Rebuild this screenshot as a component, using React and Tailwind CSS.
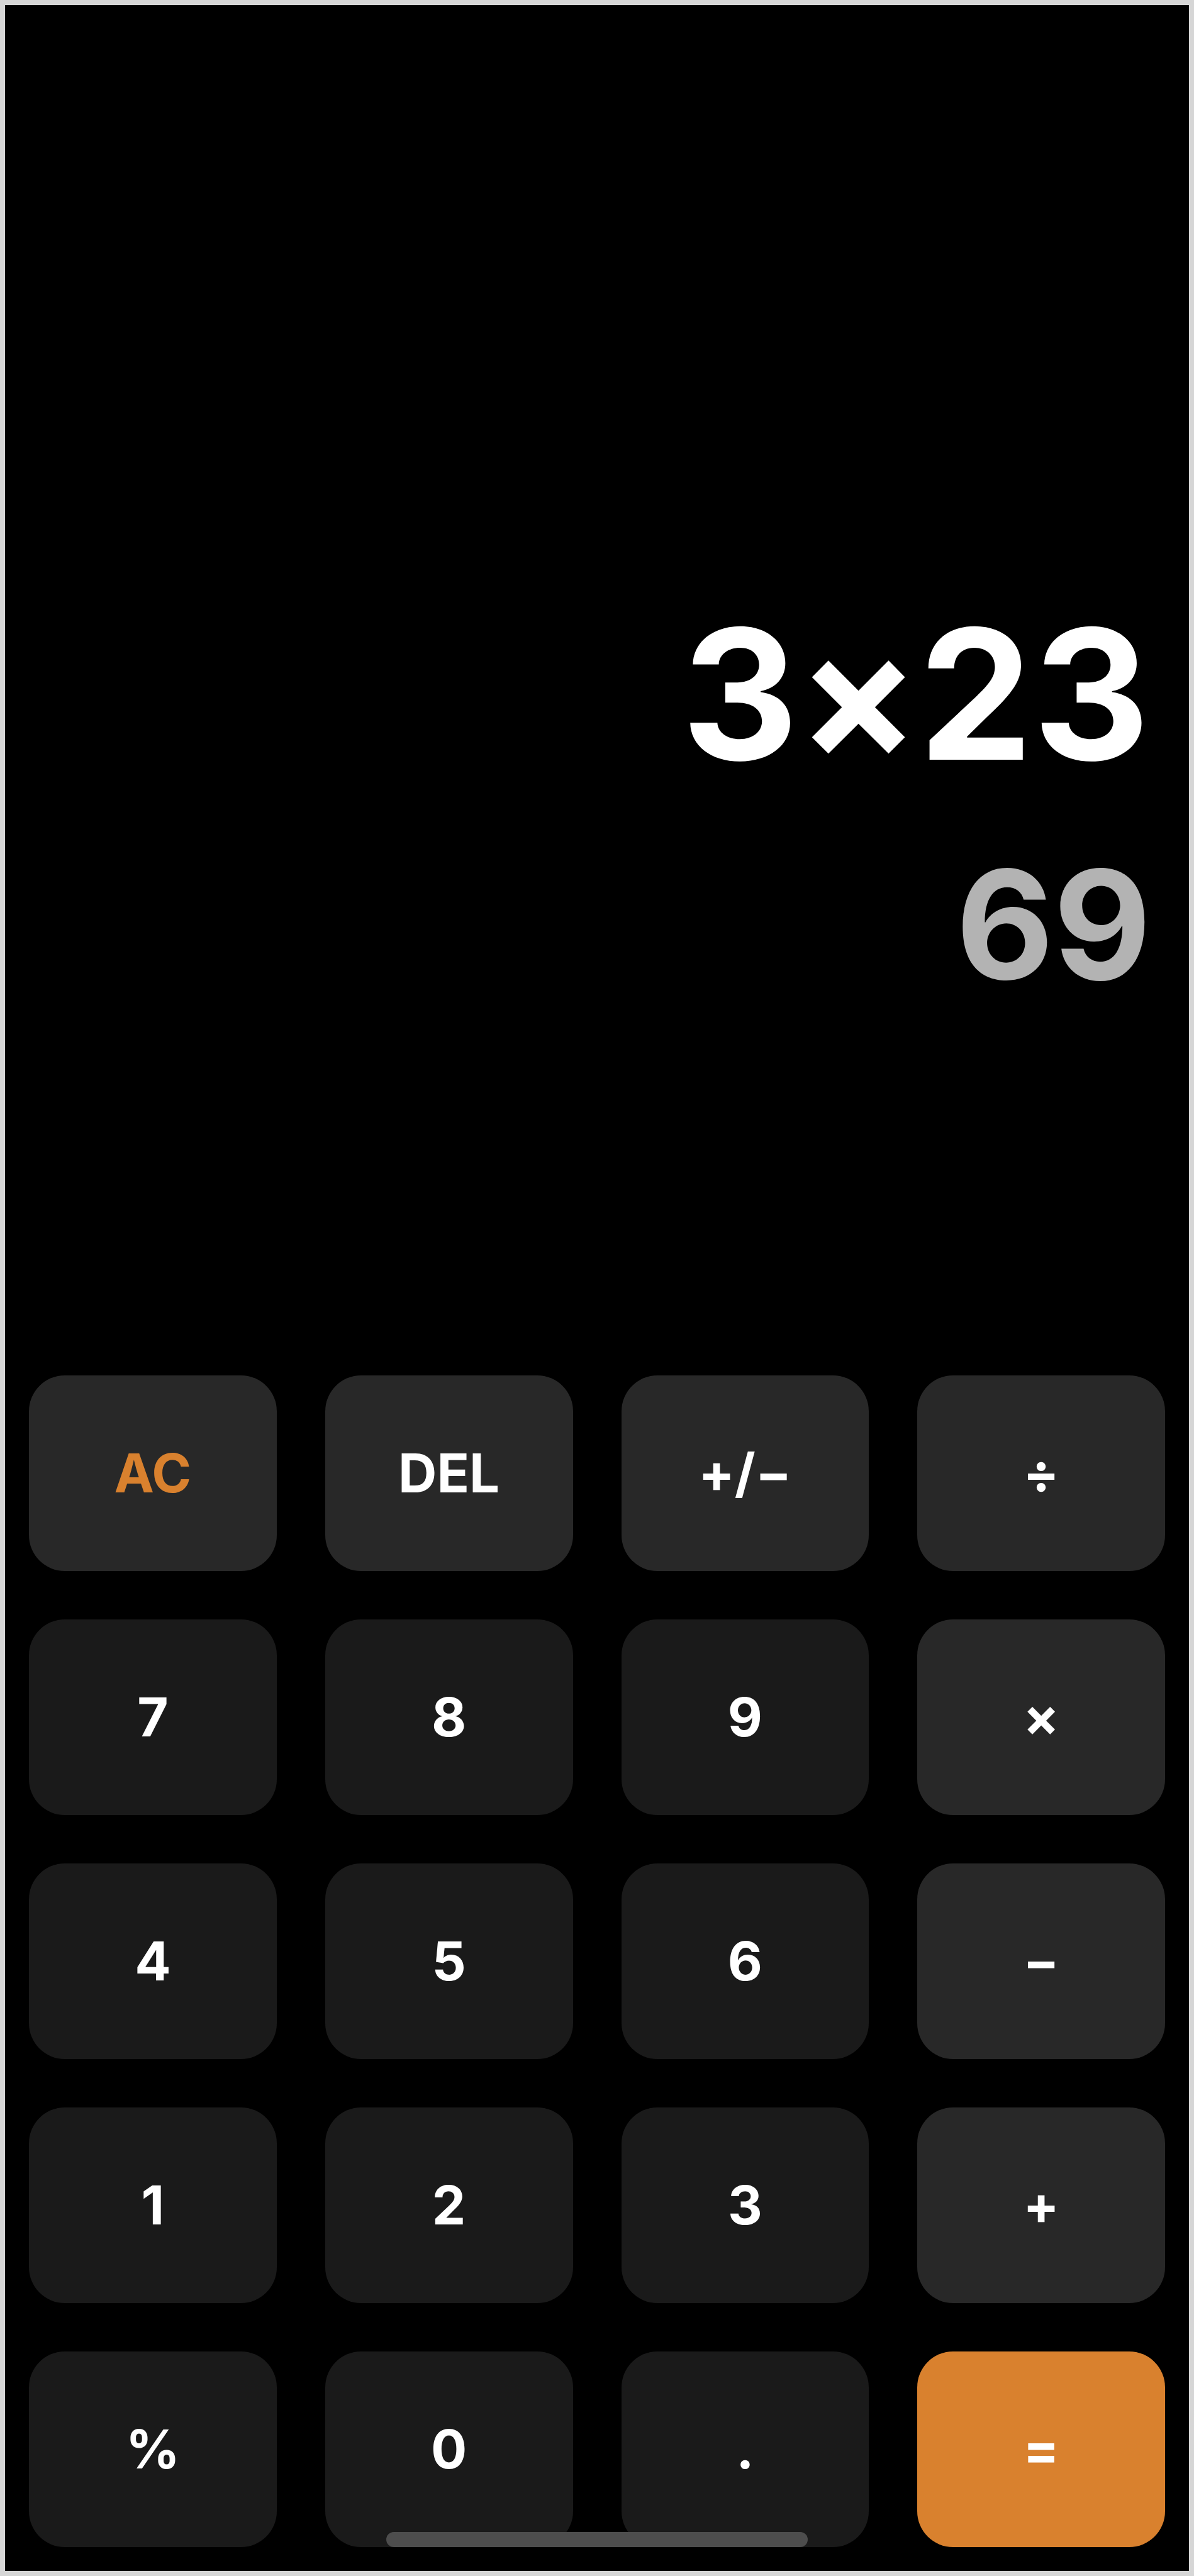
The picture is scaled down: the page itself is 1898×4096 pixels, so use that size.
const KEYS = [
  { label: "AC", name: "All clear", tone: "accent" },
  { label: "DEL", name: "Delete", tone: "operator" },
  { label: "+/−", name: "Toggle sign", tone: "operator" },
  { label: "÷", name: "Divide", tone: "operator" },
  { label: "7" },
  { label: "8" },
  { label: "9" },
  { label: "×", name: "Multiply", tone: "operator" },
  { label: "4" },
  { label: "5" },
  { label: "6" },
  { label: "−", name: "Subtract", tone: "operator" },
  { label: "1" },
  { label: "2" },
  { label: "3" },
  { label: "+", name: "Add", tone: "operator" },
  { label: "%", name: "Percent" },
  { label: "0" },
  { label: ".", name: "Decimal point" },
  { label: "=", name: "Equals", tone: "equals" },
];

const TONES = {
  digit: "bg-[#1a1a1a] text-white",
  operator: "bg-[#282828] text-white",
  accent: "bg-[#282828] text-[#d9812e]",
  equals: "bg-[#d9812e] text-white",
};

function Display({ expression, result }) {
  return (
    <section
      aria-label="Display"
      className="flex flex-1 flex-col items-end justify-end gap-12 px-[60px] pb-[534px] font-bold tabular-nums"
    >
      <p className="text-[288px] leading-[347px] text-white">{expression}</p>
      <output className="text-[240px] leading-[290px] text-[#b3b3b3]">{result}</output>
    </section>
  );
}

function Key({ label, name, tone = "digit" }) {
  return (
    <button
      type="button"
      aria-label={name}
      className={`flex h-[311px] items-center justify-center rounded-[57px] text-[85px] leading-none font-bold ${TONES[tone]}`}
    >
      {label}
    </button>
  );
}

export default function App() {
  return (
    <main className="relative flex min-h-screen flex-col border-8 border-[#d6d6d6] bg-black font-['Inter',sans-serif] [font-feature-settings:'calt'_0]">
      <Display expression="3×23" result="69" />
      <div className="grid grid-cols-4 gap-[77px] p-[38px]">
        {KEYS.map((key) => (
          <Key key={key.label} {...key} />
        ))}
      </div>
      <div className="absolute bottom-[38px] left-1/2 h-6 w-[670px] -translate-x-1/2 rounded-full bg-[#4d4d4d]" />
    </main>
  );
}
